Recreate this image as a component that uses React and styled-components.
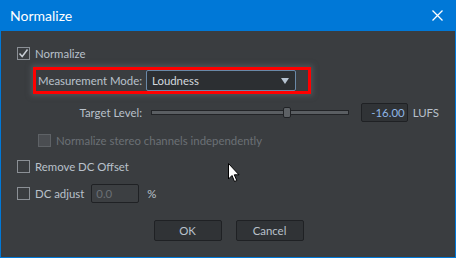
import React from "react";
import styled, { createGlobalStyle } from "styled-components";

const Global = createGlobalStyle`
  html, body { margin: 0; padding: 0; background: #3a3d40; }
  body { font-family: Lato, "Open Sans", sans-serif; }
`;

const Window = styled.div`
  position: relative;
  width: 456px;
  height: 258px;
  box-sizing: border-box;
  border: 1px solid #0078d7;
  border-top: none;
  background: #3a3d40;
  display: flex;
  flex-direction: column;
  overflow: hidden;
`;

const TitleBar = styled.div`
  height: 31px;
  margin: 0 -1px;
  background: #0078d7;
  display: flex;
  align-items: center;
  justify-content: space-between;
  padding: 0 13px 0 10px;
  color: #ffffff;
  font-size: 14px;
`;

const Close = styled.svg`
  width: 11px;
  height: 11px;
`;

const Body = styled.div`
  flex: 1;
  display: flex;
  flex-direction: column;
  padding: 12px 16px 0 16px;
  font-size: 11.4px;
  color: #b9c1cb;
`;

const Row = styled.div`
  display: flex;
  align-items: center;
  height: 20px;
  margin-top: ${(p) => p.$mt || 0}px;
  padding-left: ${(p) => p.$indent || 0}px;
  color: ${(p) => (p.$disabled ? "#6b7075" : "inherit")};
`;

const Box = styled.span`
  width: 13px;
  height: 13px;
  box-sizing: border-box;
  border: 1px solid ${(p) => (p.$disabled ? "#5e6266" : "#8b9096")};
  background: ${(p) => (p.$disabled ? "#4a4d51" : "transparent")};
  margin-right: 5px;
  display: flex;
  align-items: center;
  justify-content: center;
  flex-shrink: 0;
`;

const Highlight = styled.div`
  display: flex;
  align-items: center;
  margin: 4px 0 0 16px;
  width: 278px;
  height: 27px;
  box-sizing: border-box;
  border: 3px solid #ff0000;
  padding-left: 2px;
  box-shadow: 0 0 5px 2px rgba(95, 100, 106, 0.55);
`;

const Label = styled.span`
  width: ${(p) => p.$w}px;
  text-align: ${(p) => p.$align || "left"};
  flex-shrink: 0;
  white-space: nowrap;
`;

const Select = styled.div`
  width: 150px;
  height: 21px;
  box-sizing: border-box;
  border: 1px solid #6a89a8;
  border-radius: 2px;
  background: #2c2f32;
  color: #d3d8de;
  display: flex;
  align-items: center;
  justify-content: space-between;
  padding: 0 6px 0 5px;
`;

const Arrow = styled.span`
  width: 0;
  height: 0;
  border-left: 4.5px solid transparent;
  border-right: 4.5px solid transparent;
  border-top: 6px solid #b6c3d1;
`;

const Slider = styled.div`
  position: relative;
  width: 202px;
  height: 5px;
  box-sizing: border-box;
  margin-left: 9px;
  background: #5a5e62;
  border: 1px solid #222427;
`;

const Thumb = styled.span`
  position: absolute;
  top: -4px;
  width: 8px;
  height: 11px;
  box-sizing: border-box;
  border: 1px solid #202225;
  border-radius: 2px;
  background: #5d6165;
`;

const NumBox = styled.div`
  width: 48px;
  height: 19px;
  box-sizing: border-box;
  margin-left: ${(p) => p.$ml}px;
  border: 1px solid #1f2124;
  border-radius: 2px;
  background: ${(p) => (p.$disabled ? "#3c3f42" : "#303336")};
  color: ${(p) => (p.$disabled ? "#6b7075" : "#8fb6e6")};
  display: flex;
  align-items: center;
  justify-content: ${(p) => (p.$disabled ? "flex-start" : "flex-end")};
  padding: 0 2px 0 4px;
`;

const Unit = styled.span`
  margin-left: ${(p) => p.$ml}px;
`;

const Buttons = styled.div`
  display: flex;
  justify-content: center;
  gap: 14px;
  margin-top: 17px;
  padding-left: 1px;
`;

const Button = styled.div`
  width: 68px;
  height: 21px;
  box-sizing: border-box;
  border: 1px solid #1f2124;
  border-radius: 2px;
  background: #303336;
  display: flex;
  align-items: center;
  justify-content: center;
  color: #b9c1cb;
`;

const Cursor = styled.svg`
  position: absolute;
  left: 227px;
  top: 163px;
  width: 12px;
  height: 20px;
`;

const Check = () => (
  <svg width="11" height="11" viewBox="0 0 11 11">
    <path d="M1.5 5.5 L4.2 8.5 L9.5 1.5" fill="none" stroke="#c8ced5" strokeWidth="1.5" />
  </svg>
);

const level = -16;
const thumbLeft = Math.round(((level + 40) / 37) * 202);

export default function App() {
  return (
    <>
      <Global />
      <Window>
        <TitleBar>
          <span>Normalize</span>
          <Close viewBox="0 0 11 11">
            <path d="M0.5 0.5 L10.5 10.5 M10.5 0.5 L0.5 10.5" stroke="#fff" strokeWidth="1.3" />
          </Close>
        </TitleBar>
        <Body>
          <Row>
            <Box>
              <Check />
            </Box>
            Normalize
          </Row>
          <Highlight>
            <Label $w={108}>Measurement Mode:</Label>
            <Select>
              Loudness
              <Arrow />
            </Select>
          </Highlight>
          <Row $mt={8}>
            <Label $w={125} $align="right">Target Level:</Label>
            <Slider>
              <Thumb style={{ left: thumbLeft }} />
            </Slider>
            <NumBox $ml={12}>-16.00</NumBox>
            <Unit $ml={5}>LUFS</Unit>
          </Row>
          <Row $mt={8} $indent={21} $disabled>
            <Box $disabled />
            Normalize stereo channels independently
          </Row>
          <Row $mt={6}>
            <Box />
            Remove DC Offset
          </Row>
          <Row $mt={7}>
            <Box />
            DC adjust
            <NumBox $ml={7} $disabled>0.0</NumBox>
            <Unit $ml={8}>%</Unit>
          </Row>
          <Buttons>
            <Button>OK</Button>
            <Button>Cancel</Button>
          </Buttons>
        </Body>
        <Cursor viewBox="0 0 12 20">
          <path d="M0.5 0.5 L0.5 16 L4 12.5 L6.5 18.5 L8.8 17.5 L6.3 11.8 L11 11.8 Z" fill="#fff" stroke="#000" strokeWidth="1" />
        </Cursor>
      </Window>
    </>
  );
}
